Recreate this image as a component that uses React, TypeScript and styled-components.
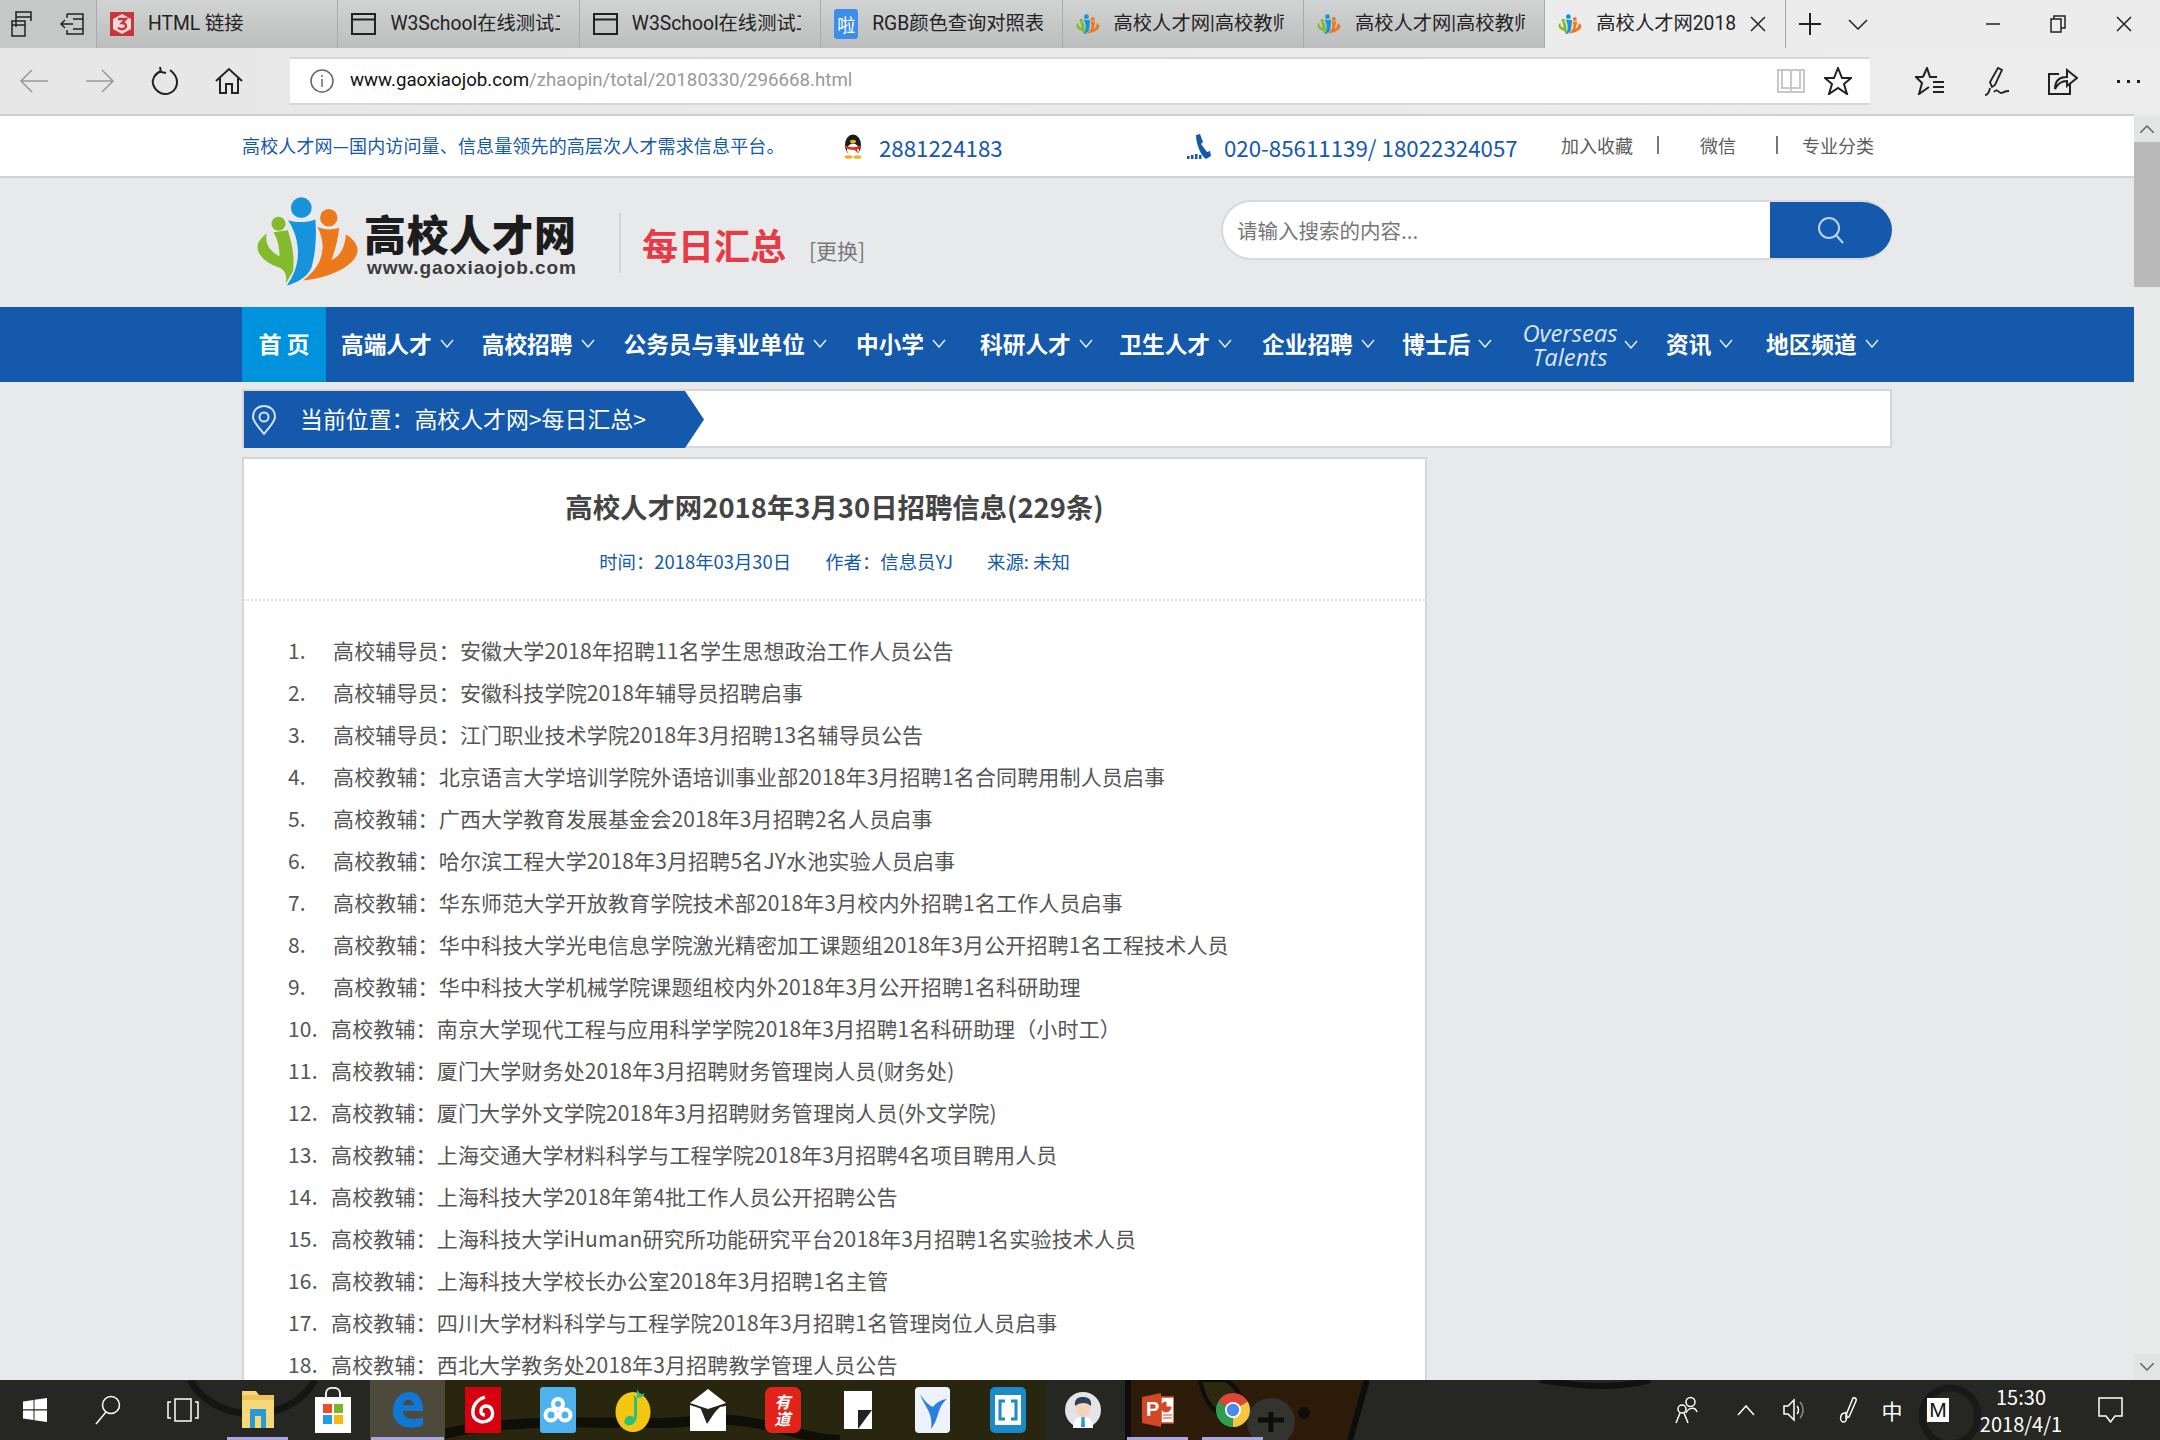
import React from "react";
import styled, { createGlobalStyle } from "styled-components";

const BLUE = "#1459ab";
const CJK = `"Noto Sans CJK SC", "Noto Sans", sans-serif`;

const GlobalStyle = createGlobalStyle`
    html, body {
        margin: 0;
        padding: 0;
        background: #e8e9eb;
    }
    * {
        box-sizing: border-box;
    }
`;

const tabs = [
    { title: "HTML 链接", icon: "w3" },
    { title: "W3School在线测试工具", icon: "page" },
    { title: "W3School在线测试工具", icon: "page" },
    { title: "RGB颜色查询对照表", icon: "rgb" },
    { title: "高校人才网|高校教师招聘", icon: "logo" },
    { title: "高校人才网|高校教师招聘", icon: "logo" },
    { title: "高校人才网2018年3月30日招聘信息", icon: "logo", active: true },
];

const navItems = [
    { name: "高端人才", space: 28 },
    { name: "高校招聘", space: 29 },
    { name: "公务员与事业单位", space: 29 },
    { name: "中小学", space: 34 },
    { name: "科研人才", space: 26.5 },
    { name: "卫生人才", space: 30 },
    { name: "企业招聘", space: 27.5 },
    { name: "博士后", space: 30 },
];

const notices = [
    "高校辅导员：安徽大学2018年招聘11名学生思想政治工作人员公告",
    "高校辅导员：安徽科技学院2018年辅导员招聘启事",
    "高校辅导员：江门职业技术学院2018年3月招聘13名辅导员公告",
    "高校教辅：北京语言大学培训学院外语培训事业部2018年3月招聘1名合同聘用制人员启事",
    "高校教辅：广西大学教育发展基金会2018年3月招聘2名人员启事",
    "高校教辅：哈尔滨工程大学2018年3月招聘5名JY水池实验人员启事",
    "高校教辅：华东师范大学开放教育学院技术部2018年3月校内外招聘1名工作人员启事",
    "高校教辅：华中科技大学光电信息学院激光精密加工课题组2018年3月公开招聘1名工程技术人员",
    "高校教辅：华中科技大学机械学院课题组校内外2018年3月公开招聘1名科研助理",
    "高校教辅：南京大学现代工程与应用科学学院2018年3月招聘1名科研助理（小时工）",
    "高校教辅：厦门大学财务处2018年3月招聘财务管理岗人员(财务处)",
    "高校教辅：厦门大学外文学院2018年3月招聘财务管理岗人员(外文学院)",
    "高校教辅：上海交通大学材料科学与工程学院2018年3月招聘4名项目聘用人员",
    "高校教辅：上海科技大学2018年第4批工作人员公开招聘公告",
    "高校教辅：上海科技大学iHuman研究所功能研究平台2018年3月招聘1名实验技术人员",
    "高校教辅：上海科技大学校长办公室2018年3月招聘1名主管",
    "高校教辅：四川大学材料科学与工程学院2018年3月招聘1名管理岗位人员启事",
    "高校教辅：西北大学教务处2018年3月招聘教学管理人员公告",
];

const LogoMark = ({ size }: { size: number }) => (
    <svg width={size} height={size * 0.87} viewBox="30 20 310 270">
        <circle cx="165" cy="55" r="31" fill="#1793dc" />
        <circle cx="247" cy="85" r="26" fill="#ec7a1c" />
        <circle cx="97" cy="103" r="21" fill="#82bb2b" />
        <path
            d="M82 128 L125 122 C140 170 145 210 140 245 L118 282 C125 255 115 240 95 232 C60 220 30 195 35 165 C40 150 50 140 62 132 C55 160 70 185 100 200 C100 175 95 150 82 128Z"
            fill="#82bb2b"
        />
        <path
            d="M125 92 C150 100 180 100 207 90 C212 150 205 200 195 235 C180 265 150 280 122 287 C140 260 155 230 155 190 C155 155 145 120 125 92Z"
            fill="#1793dc"
        />
        <path
            d="M213 112 C235 122 255 122 278 115 C275 150 265 185 255 210 C275 205 295 180 298 135 C325 150 340 175 330 195 C315 235 240 265 170 272 C200 250 225 220 228 180 C230 160 225 135 213 112Z"
            fill="#ec7a1c"
        />
    </svg>
);

const Line = ({ w, h, color = "#222", sw = 1.5, children }: { w: number; h: number; color?: string; sw?: number; children: React.ReactNode }) => (
    <svg width={w} height={h} viewBox={`0 0 ${w} ${h}`} fill="none" stroke={color} strokeWidth={sw}>
        {children}
    </svg>
);

const TabIcon = ({ kind }: { kind: string }) => {
    if (kind === "w3")
        return (
            <svg width="24" height="24" viewBox="0 0 24 24">
                <rect width="24" height="24" fill="#c8353a" />
                <path d="M12 2 L21 7 V17 L12 22 L3 17 V7Z" fill="#f3d8d8" />
                <path d="M8 7 H16 L12 11 C16 11 17 14 15 16 C13 18 10 17 8 16" fill="none" stroke="#c8353a" strokeWidth="2.4" />
            </svg>
        );
    if (kind === "page")
        return (
            <Line w={25} h={24} sw={2}>
                <rect x="1" y="2" width="23" height="20" />
                <path d="M1 7.5 H24" />
            </Line>
        );
    if (kind === "rgb") return <RgbBadge>啦</RgbBadge>;
    return <LogoMark size={24} />;
};

const Chevron = () => (
    <Line w={14} h={9} color="#e6eef8">
        <path d="M1 1 L7 8 L13 1" />
    </Line>
);

const App = () => (
    <Screen>
        <GlobalStyle />
        <TabStrip>
            <StripButtons>
                <Line w={24} h={26}>
                    <path d="M5 1 H20 V6 H5Z M5 6 V16 M20 6 V10 M1 10 H14 V25 H1Z M1 14 H14" />
                </Line>
                <Line w={24} h={22}>
                    <path d="M7 1 H23 V21 H7 V17 M7 1 V5 M13 6 H23 M13 16 H23 M13 11 H1 M5 7 L1 11 L5 15" />
                </Line>
            </StripButtons>
            {tabs.map((tab, i) => (
                <Tab key={i} $active={tab.active}>
                    <TabIcon kind={tab.icon} />
                    <TabTitle>{tab.title}</TabTitle>
                    {tab.active && (
                        <Line w={16} h={16}>
                            <path d="M1 1 L15 15 M15 1 L1 15" />
                        </Line>
                    )}
                </Tab>
            ))}
            <StripAction $width={48}>
                <Line w={22} h={22} sw={2}>
                    <path d="M11 0 V22 M0 11 H22" />
                </Line>
            </StripAction>
            <StripAction $width={48}>
                <Line w={20} h={11}>
                    <path d="M1 1 L10 10 L19 1" />
                </Line>
            </StripAction>
            <WindowButtons>
                <Line w={14} h={2}>
                    <path d="M0 1 H14" />
                </Line>
                <Line w={16} h={18}>
                    <path d="M4 4 V1 H15 V13 H11 M1 4 H11 V17 H1Z" />
                </Line>
                <Line w={16} h={16}>
                    <path d="M1 1 L15 15 M15 1 L1 15" />
                </Line>
            </WindowButtons>
        </TabStrip>

        <AddressRow>
            <NavButtons>
                <Line w={30} h={26} color="#9a9a9a" sw={1.6}>
                    <path d="M29 13 H2 M13 2 L2 13 L13 24" />
                </Line>
                <Line w={30} h={26} color="#9a9a9a" sw={1.6}>
                    <path d="M1 13 H28 M17 2 L28 13 L17 24" />
                </Line>
                <Line w={28} h={30} sw={2}>
                    <path d="M10 5 C3 8 1 14 2 18 C4 25 10 28 14 28 C21 28 26 23 26 16 C26 11 23 7 19 4 M9 1 L10 6 L15 7" />
                </Line>
                <Line w={28} h={28} sw={2}>
                    <path d="M1 14 L14 2 L27 14 M5 11 V26 H11 V17 H17 V26 H23 V11" />
                </Line>
            </NavButtons>
            <AddressField>
                <Line w={24} h={24} color="#666">
                    <circle cx="12" cy="12" r="11" />
                    <path d="M12 10 V18 M12 6 V8" />
                </Line>
                <Url>
                    www.gaoxiaojob.com<UrlPath>/zhaopin/total/20180330/296668.html</UrlPath>
                </Url>
                <Line w={28} h={26} color="#c8c8c8" sw={2}>
                    <path d="M1 2 H13 L14 4 L15 2 H27 V24 H1Z M14 4 V24 M5 2 V20 H23 V2" />
                </Line>
                <FieldStar>
                    <Line w={28} h={28} sw={2}>
                        <path d="M14 1 L18 11 L27 11 L20 17 L23 27 L14 21 L5 27 L8 17 L1 11 L10 11Z" />
                    </Line>
                </FieldStar>
            </AddressField>
            <ToolButtons>
                <Line w={30} h={28} sw={2}>
                    <path d="M8 10 L12 1 L15 10 H22 M8 10 H1 L7 16 L4 27 L14 20 M18 15 H29 M18 20 H29 M18 25 H29" />
                </Line>
                <Line w={26} h={30} sw={1.8}>
                    <path d="M8 21 L6 16 L14 2 L18 4 L11 19Z M6 22 C5 27 3 29 1 29 M10 26 C13 22 15 27 17 27 C19 27 20 25 25 25" />
                </Line>
                <Line w={30} h={28} sw={2}>
                    <path d="M22 16 V27 H1 V7 H11 M7 22 C7 13 12 10 19 10 V3 L29 11 L19 19 V14 C14 14 10 16 7 22Z" />
                </Line>
                <Dots>
                    <i />
                    <i />
                    <i />
                </Dots>
            </ToolButtons>
        </AddressRow>

        <PageView>
            <Content>
                <TopBar>
                    <TopInner>
                        <Slogan>高校人才网—国内访问量、信息量领先的高层次人才需求信息平台。</Slogan>
                        <ContactQQ>
                            <svg width="24" height="25" viewBox="0 0 24 25">
                                <ellipse cx="12" cy="11" rx="8" ry="10.5" fill="#1b1b1b" />
                                <ellipse cx="12" cy="16" rx="6" ry="6.5" fill="#fff" />
                                <ellipse cx="12" cy="7.5" rx="3" ry="1.8" fill="#f2b01e" />
                                <path d="M4 11 C9 14 15 14 20 11 L20 14 C18 15 17 15 16 15.5 L17 19 L13.5 16 C10 16 7 15 4 14Z" fill="#e12d1f" />
                                <ellipse cx="7.5" cy="23" rx="4" ry="1.8" fill="#f2b01e" />
                                <ellipse cx="16.5" cy="23" rx="4" ry="1.8" fill="#f2b01e" />
                            </svg>
                            <ContactNumber>2881224183</ContactNumber>
                        </ContactQQ>
                        <ContactPhone>
                            <svg width="24" height="25" viewBox="0 0 24 25" fill={BLUE}>
                                <path d="M9 1 L13 0 L16 8 L14 10 L20 18 L23 17 L24 22 L19 25 C14 22 9 10 9 1Z" />
                                <rect x="0" y="22" width="2.5" height="3" />
                                <rect x="4" y="21" width="2.5" height="4" />
                                <rect x="8" y="20" width="2.5" height="5" />
                                <rect x="12" y="21" width="2.5" height="4" />
                            </svg>
                            <ContactNumber>020-85611139/ 18022324057</ContactNumber>
                        </ContactPhone>
                        <TopLinks>
                            <TopLink>加入收藏</TopLink>
                            <LinkRule $left={24} $right={41} />
                            <TopLink>微信</TopLink>
                            <LinkRule $left={40} $right={24} />
                            <TopLink>专业分类</TopLink>
                        </TopLinks>
                    </TopInner>
                </TopBar>

                <Header>
                    <LogoBlock>
                        <LogoMark size={104} />
                        <LogoWords>
                            <LogoName>高校人才网</LogoName>
                            <LogoUrl>www.gaoxiaojob.com</LogoUrl>
                        </LogoWords>
                    </LogoBlock>
                    <SectionName>每日汇总</SectionName>
                    <SwapLink>[更换]</SwapLink>
                    <SearchBox>
                        <SearchInput>请输入搜索的内容...</SearchInput>
                        <SearchButton>
                            <Line w={28} h={28} color="#b9d3ee" sw={2}>
                                <circle cx="12" cy="12" r="10" />
                                <path d="M19 19 L26 27" />
                            </Line>
                        </SearchButton>
                    </SearchBox>
                </Header>

                <NavBar>
                    <NavInner>
                        <HomeItem>首 页</HomeItem>
                        {navItems.map((item) => (
                            <NavItem key={item.name} $space={item.space}>
                                {item.name}
                                <Chevron />
                            </NavItem>
                        ))}
                        <OverseasItem $space={28.5}>
                            <OverseasText>
                                Overseas
                                <br />
                                Talents
                            </OverseasText>
                            <Chevron />
                        </OverseasItem>
                        <NavItem $space={32.5}>
                            资讯
                            <Chevron />
                        </NavItem>
                        <NavItem $space={0}>
                            地区频道
                            <Chevron />
                        </NavItem>
                    </NavInner>
                </NavBar>

                <Breadcrumb>
                    <CrumbTab>
                        <Line w={26} h={30} color="#d5e2f2" sw={2}>
                            <path d="M13 29 C8 22 2 17 2 12 C2 5 7 1 13 1 C19 1 24 5 24 12 C24 17 18 22 13 29Z" />
                            <circle cx="13" cy="12" r="4.5" />
                        </Line>
                        <CrumbText>当前位置：高校人才网&gt;每日汇总&gt;</CrumbText>
                    </CrumbTab>
                </Breadcrumb>

                <Article>
                    <ArticleHead>
                        <ArticleTitle>高校人才网2018年3月30日招聘信息(229条)</ArticleTitle>
                        <ArticleMeta>
                            <span>时间：2018年03月30日</span>
                            <span>作者：信息员YJ</span>
                            <span>来源: 未知</span>
                        </ArticleMeta>
                    </ArticleHead>
                    <NoticeList>
                        {notices.map((text, i) => (
                            <NoticeRow key={i}>
                                <NoticeIndex $wide={i >= 9}>{i + 1}.</NoticeIndex>
                                {text}
                            </NoticeRow>
                        ))}
                    </NoticeList>
                </Article>
            </Content>
            <ScrollBar>
                <ScrollArrow>
                    <Line w={14} h={8} color="#666">
                        <path d="M0 8 L7 1 L14 8" />
                    </Line>
                </ScrollArrow>
                <ScrollThumb />
                <ScrollTrack />
                <ScrollArrow>
                    <Line w={14} h={8} color="#666">
                        <path d="M0 0 L7 7 L14 0" />
                    </Line>
                </ScrollArrow>
            </ScrollBar>
        </PageView>

        <Taskbar>
            <Wallpaper viewBox="0 0 2160 60" preserveAspectRatio="none">
                <path d="M445 0 H1045 V60 H445Z" fill="#29260f" />
                <path d="M1128 0 H1366 L1352 60 H1128Z" fill="#2c1b08" />
                <path d="M1128 0 V60 M1367 0 L1350 60" stroke="#0d0d0b" strokeWidth="6" fill="none" />
                <path d="M1200 0 C1205 25 1215 35 1238 40 C1250 30 1240 8 1225 0Z" fill="#2c2a0e" stroke="#0d0d0b" strokeWidth="4" />
                <circle cx="1271" cy="42" r="24" fill="#33332f" />
                <path d="M1258 40 H1284 M1271 32 V52" stroke="#0d0d0b" strokeWidth="5" />
                <circle cx="1304" cy="33" r="6" fill="#0d0d0b" />
                <path d="M190 0 C215 45 290 45 315 0" stroke="#151513" strokeWidth="7" fill="none" />
                <path d="M420 60 C520 30 640 50 700 40 C760 35 800 60 840 60" stroke="#0f0f08" strokeWidth="10" fill="none" />
                <path d="M1540 0 C1590 8 1620 8 1650 0" stroke="#111" strokeWidth="6" fill="none" />
                <circle cx="1950" cy="36" r="28" stroke="#191917" strokeWidth="7" fill="none" />
            </Wallpaper>
            <StartCell>
                <svg width="24" height="24" viewBox="0 0 24 24" fill="#fff">
                    <path d="M0 3.4 L10.5 2 V11.3 H0Z M11.5 1.8 L24 0 V11.3 H11.5Z M0 12.5 H10.5 V22 L0 20.6Z M11.5 12.5 H24 V24 L11.5 22.2Z" />
                </svg>
            </StartCell>
            <AppCell>
                <Line w={26} h={30} color="#fff">
                    <circle cx="16" cy="10" r="8.5" />
                    <path d="M11 17 L1 29" />
                </Line>
            </AppCell>
            <AppCell>
                <Line w={32} h={24} color="#fff">
                    <rect x="8" y="1" width="16" height="22" />
                    <path d="M4 4 H1 V20 H4 M28 4 H31 V20 H28" />
                </Line>
            </AppCell>
            <AppCell $running>
                <svg width="32" height="40" viewBox="0 0 32 40">
                    <path d="M0 1 H14 L17 5 H32 V38 H0Z" fill="#f6d77a" />
                    <path d="M0 5 H32 V10 H0Z" fill="#f0c253" />
                    <path d="M8 38 V19 H24 V38 H19 V26 H13 V38Z" fill="#2a9ad6" />
                </svg>
            </AppCell>
            <AppCell>
                <svg width="36" height="46" viewBox="0 0 36 46">
                    <path d="M11 12 V6 C11 -1 25 -1 25 6 V12" fill="none" stroke="#eee" strokeWidth="2" />
                    <rect y="10" width="36" height="36" fill="#fff" />
                    <rect x="8" y="17" width="9" height="9" fill="#e8512c" />
                    <rect x="19" y="17" width="9" height="9" fill="#7db32a" />
                    <rect x="8" y="28" width="9" height="9" fill="#1ba1e2" />
                    <rect x="19" y="28" width="9" height="9" fill="#f5b916" />
                </svg>
            </AppCell>
            <AppCell $running $active>
                <svg width="30" height="36" viewBox="0 0 30 36">
                    <path d="M0 20 C0 6 8 0 17 0 C25 0 30 7 30 19 H10 C10 26 20 30 30 25 V33 C18 39 0 35 0 20Z M10 13 H21 C20 6 11 6 10 13Z" fill="#0f78d4" fillRule="evenodd" />
                </svg>
            </AppCell>
            <AppCell>
                <SquareApp $bg="#d7000f" $w={36} $h={46}>
                    <Line w={26} h={30} color="#fff" sw={3.4}>
                        <path d="M15 2 C6 5 2 12 3 19 C4 26 13 29 19 25 C25 21 23 11 16 11 C10 11 9 20 15 20" />
                    </Line>
                </SquareApp>
            </AppCell>
            <AppCell>
                <SquareApp $bg="#4db2ee" $w={36} $h={46} $radius={3}>
                    <Line w={30} h={26} color="#fff" sw={4}>
                        <circle cx="15" cy="7" r="5" />
                        <circle cx="8" cy="18" r="5.5" />
                        <circle cx="22" cy="18" r="5.5" />
                    </Line>
                </SquareApp>
            </AppCell>
            <AppCell>
                <svg width="36" height="46" viewBox="0 0 36 46">
                    <ellipse cx="18" cy="25" rx="17.5" ry="20" fill="#f2c612" />
                    <path d="M22 2 L22 28 C22 42 6 40 10 32 C13 27 18 29 19 31 L19 8 C22 12 27 12 30 6 C27 8 24 7 22 2Z" fill="#2dbf7a" />
                </svg>
            </AppCell>
            <AppCell>
                <svg width="36" height="42" viewBox="0 0 36 42" fill="#fff">
                    <path d="M18 0 L36 14 L18 20 L0 14Z" />
                    <path d="M0 16 L24 24 L30 18 L36 17 V42 H0Z" />
                    <path d="M10 18 L25 23 L17 35Z" fill="#222" />
                </svg>
            </AppCell>
            <AppCell>
                <SquareApp $bg="#e3231a" $w={36} $h={46} $radius={7}>
                    <YoudaoText>有道</YoudaoText>
                </SquareApp>
            </AppCell>
            <AppCell>
                <svg width="28" height="38" viewBox="0 0 28 38">
                    <rect width="28" height="38" fill="#fff" />
                    <path d="M14 38 L28 19 H14Z" fill="#222" />
                    <path d="M18 38 L28 25 V38Z" fill="#fff" />
                </svg>
            </AppCell>
            <AppCell>
                <SquareApp $bg="#eef3fb" $w={35} $h={46} $radius={4}>
                    <svg width="30" height="40" viewBox="0 0 30 40" fill="#2a7fe0">
                        <path d="M2 4 C6 10 10 15 15 17 C18 13 22 10 29 9 C24 13 22 18 20 24 C18 31 16 35 13 39 C14 32 13 27 11 22 C8 16 4 10 2 4Z" />
                    </svg>
                </SquareApp>
            </AppCell>
            <AppCell>
                <SquareApp $bg="#1a8ac8" $w={36} $h={46} $radius={5}>
                    <BracketBox>
                        <Line w={24} h={26} color="#1a8ac8" sw={3}>
                            <path d="M9 4 H4 V22 H9 M15 4 H20 V22 H15" />
                        </Line>
                    </BracketBox>
                </SquareApp>
            </AppCell>
            <AppCell>
                <svg width="36" height="36" viewBox="0 0 36 36">
                    <circle cx="18" cy="18" r="18" fill="#e2e4e6" />
                    <path d="M8 36 C8 28 12 25 18 25 C24 25 28 28 28 36Z" fill="#fff" />
                    <ellipse cx="18" cy="16" rx="7" ry="9" fill="#f6d3b8" />
                    <path d="M10 14 C9 6 14 5 18 5 C23 5 27 7 26 14 C22 10 15 10 10 14Z" fill="#2e3f5e" />
                    <path d="M16.5 25 H19.5 L20 35 H16Z" fill="#2a9ad6" />
                </svg>
            </AppCell>
            <AppCell $running>
                <svg width="32" height="34" viewBox="0 0 32 34">
                    <path d="M0 4 L19 0 V34 L0 30Z" fill="#d24726" />
                    <rect x="19" y="4" width="13" height="26" fill="#fff" stroke="#d24726" strokeWidth="1.5" />
                    <path d="M24 9 A5 5 0 1 0 29 14 H24Z M21 22 H30 M21 25 H30" fill="#d24726" stroke="#d24726" />
                    <PptLetter x="4" y="23">P</PptLetter>
                </svg>
            </AppCell>
            <AppCell $running>
                <svg width="34" height="34" viewBox="0 0 34 34">
                    <path d="M17 17 L2.3 8.5 A17 17 0 0 1 31.7 8.5Z" fill="#e0453a" />
                    <path d="M17 17 L31.7 8.5 A17 17 0 0 1 17 34Z" fill="#f5c63f" />
                    <path d="M17 17 L17 34 A17 17 0 0 1 2.3 8.5Z" fill="#2f9e52" />
                    <circle cx="17" cy="17" r="8" fill="#fff" />
                    <circle cx="17" cy="17" r="6.2" fill="#4a89f0" />
                </svg>
            </AppCell>
            <Tray>
                <TrayCell>
                    <Line w={23} h={28} color="#fff">
                        <circle cx="15.5" cy="6" r="4.5" />
                        <circle cx="7" cy="13" r="4" />
                        <path d="M11 17 C13 12 20 10 22 16 M1 27 L5 17 M13 27 L9 17" />
                    </Line>
                </TrayCell>
                <TrayCell>
                    <Line w={18} h={11} color="#fff">
                        <path d="M1 10 L9 1 L17 10" />
                    </Line>
                </TrayCell>
                <TrayCell>
                    <Line w={22} h={26} color="#fff">
                        <path d="M1 9 H5 L11 3 V23 L5 17 H1Z" />
                        <path d="M14 9 C16 11 16 15 14 17" />
                        <path d="M17 5 C21 9 21 17 17 21" stroke="#888" />
                    </Line>
                </TrayCell>
                <TrayCell>
                    <Line w={20} h={28} color="#fff">
                        <path d="M8 19 L15 2 C17 1 19 3 18 5 L11 21 L8 22Z M8 17 C2 16 1 25 5 26 C9 27 10 19 7 16" />
                    </Line>
                </TrayCell>
                <TrayCell>
                    <ImeGlyph>中</ImeGlyph>
                </TrayCell>
                <TrayCell>
                    <ImeBox>M</ImeBox>
                </TrayCell>
                <Clock>
                    <span>15:30</span>
                    <span>2018/4/1</span>
                </Clock>
                <TrayCell>
                    <Line w={25} h={26} color="#fff">
                        <path d="M1 1 H24 V19 H17 L12.5 25 L8 19 H1Z" />
                    </Line>
                </TrayCell>
            </Tray>
        </Taskbar>
    </Screen>
);

export default App;

const Screen = styled.div`
    width: 2160px;
    height: 1440px;
    display: flex;
    flex-direction: column;
    overflow: hidden;
    font-family: ${CJK};
`;

const TabStrip = styled.div`
    height: 48px;
    flex: none;
    display: flex;
    background: linear-gradient(90deg, #c6c7c7 0%, #cfd0d0 60%, #ececec 84%, #ececec 100%);
`;

const StripButtons = styled.div`
    width: 96px;
    flex: none;
    display: flex;
    align-items: center;
    gap: 25px;
    padding-left: 11px;
`;

const Tab = styled.div<{ $active?: boolean }>`
    width: 241.4px;
    flex: none;
    display: flex;
    align-items: center;
    gap: 14px;
    padding: 0 19px 0 13px;
    border-left: 1px solid #a9aaaa;
    background: ${(p) => (p.$active ? "#ececec" : "linear-gradient(180deg, #d2d3d3 0%, #bcbdbd 100%)")};
    ${(p) => p.$active && "border-right: 1px solid #a9aaaa;"}
`;

const TabTitle = styled.div`
    flex: 1;
    min-width: 0;
    overflow: hidden;
    white-space: nowrap;
    font-family: "Roboto", ${CJK};
    font-size: 19.3px;
    line-height: 48px;
    color: #222;
`;

const RgbBadge = styled.div`
    width: 24px;
    height: 30px;
    flex: none;
    border-radius: 3px;
    background: #3d8ee8;
    color: #fff;
    font-size: 18px;
    line-height: 30px;
    text-align: center;
`;

const StripAction = styled.div<{ $width: number }>`
    width: ${(p) => p.$width}px;
    flex: none;
    display: flex;
    align-items: center;
    justify-content: center;
`;

const WindowButtons = styled.div`
    flex: 1;
    display: flex;
    align-items: center;
    justify-content: space-between;
    padding: 0 28px 0 104px;
`;

const AddressRow = styled.div`
    height: 66px;
    flex: none;
    display: flex;
    align-items: center;
    background: linear-gradient(90deg, #e7e7e7 0%, #ededed 100%);
`;

const NavButtons = styled.div`
    width: 290px;
    flex: none;
    display: flex;
    align-items: center;
    gap: 36px;
    padding-left: 19px;
`;

const AddressField = styled.div`
    width: 1580px;
    height: 48px;
    flex: none;
    display: flex;
    align-items: center;
    padding: 0 18px 0 20px;
    background: #fff;
    border-top: 2px solid #d8d8d8;
    border-bottom: 2px solid #d8d8d8;
`;

const Url = styled.div`
    flex: 1;
    margin: -3px 0 0 16px;
    font-family: "Roboto", sans-serif;
    font-size: 18.7px;
    color: #111;
`;

const UrlPath = styled.span`
    color: #999;
`;

const FieldStar = styled.div`
    margin-left: 19px;
    display: flex;
`;

const ToolButtons = styled.div`
    flex: 1;
    display: flex;
    align-items: center;
    justify-content: space-between;
    padding: 0 20px 0 45px;
`;

const Dots = styled.div`
    display: flex;
    gap: 7px;
    i {
        width: 3px;
        height: 3px;
        background: #222;
    }
`;

const PageView = styled.div`
    flex: 1;
    min-height: 0;
    display: flex;
`;

const Content = styled.div`
    flex: 1;
    min-width: 0;
    overflow: hidden;
    background: #e8e9eb;
`;

const TopBar = styled.div`
    height: 64px;
    background: #fff;
    border-top: 2px solid #cfcfcf;
    border-bottom: 2px solid #d2d2d2;
`;

const TopInner = styled.div`
    width: 1650px;
    height: 100%;
    margin: 0 auto;
    display: flex;
    align-items: center;
`;

const Slogan = styled.div`
    width: 599px;
    margin-top: -2px;
    flex: none;
    font-size: 18px;
    letter-spacing: 0.15px;
    color: ${BLUE};
`;

const ContactQQ = styled.div`
    width: 346px;
    flex: none;
    display: flex;
    align-items: center;
    gap: 14px;
`;

const ContactPhone = styled.div`
    width: 374px;
    flex: none;
    display: flex;
    align-items: center;
    gap: 13px;
`;

const ContactNumber = styled.div`
    margin-top: 1px;
    font-size: 22.3px;
    color: ${BLUE};
    white-space: nowrap;
`;

const TopLinks = styled.div`
    flex: none;
    display: flex;
    align-items: center;
`;

const TopLink = styled.div`
    font-size: 18px;
    color: #5c5c5c;
    margin-top: -2px;
`;

const LinkRule = styled.div<{ $left: number; $right: number }>`
    width: 2px;
    height: 18px;
    margin: -2px ${(p) => p.$right}px 0 ${(p) => p.$left}px;
    background: #77777a;
`;

const Header = styled.div`
    width: 1650px;
    height: 129px;
    margin: 0 auto;
    display: flex;
    align-items: center;
    padding-left: 14px;
`;

const LogoBlock = styled.div`
    width: 365px;
    height: 60px;
    flex: none;
    display: flex;
    align-items: center;
    border-right: 2px solid #d3d4d6;
    svg {
        flex: none;
        margin-top: -3px;
    }
`;

const LogoWords = styled.div`
    display: flex;
    flex-direction: column;
    margin: 2px 0 0 4px;
`;

const LogoName = styled.div`
    font-size: 42px;
    font-weight: 900;
    line-height: 46px;
    letter-spacing: 0.5px;
    color: #1d1d1d;
    white-space: nowrap;
`;

const LogoUrl = styled.div`
    margin: 2px 0 0 3px;
    font-family: "Liberation Sans", sans-serif;
    font-size: 19px;
    font-weight: 700;
    line-height: 20px;
    letter-spacing: 0.9px;
    color: #3c3c3c;
    white-space: nowrap;
`;

const SectionName = styled.div`
    margin: 2px 0 0 21px;
    font-size: 36px;
    font-weight: 700;
    color: #e63a46;
`;

const SwapLink = styled.div`
    margin: 15px 0 0 23px;
    font-size: 21px;
    color: #777;
`;

const SearchBox = styled.div`
    margin: 22px 0 0 auto;
    width: 671px;
    height: 60px;
    align-self: flex-start;
    display: flex;
    border-radius: 30px;
    overflow: hidden;
    background: #fff;
    border: 2px solid #d9d9d9;
    border-right: 0;
`;

const SearchInput = styled.div`
    flex: 1;
    padding-left: 14px;
    font-size: 20.5px;
    line-height: 56px;
    color: #777;
`;

const SearchButton = styled.div`
    width: 122px;
    margin: -2px 0;
    display: flex;
    align-items: center;
    justify-content: center;
    background: ${BLUE};
`;

const NavBar = styled.div`
    height: 75px;
    background: ${BLUE};
`;

const NavInner = styled.div`
    width: 1650px;
    height: 100%;
    margin: 0 auto;
    display: flex;
`;

const HomeItem = styled.div`
    width: 84px;
    flex: none;
    margin-right: 15px;
    background: #0093dd;
    color: #fff;
    font-size: 23px;
    font-weight: 700;
    line-height: 73px;
    text-align: center;
`;

const NavItem = styled.div<{ $space: number }>`
    flex: none;
    display: flex;
    align-items: center;
    gap: 8px;
    margin-right: ${(p) => p.$space}px;
    padding-bottom: 2px;
    color: #fff;
    font-size: 22.7px;
    font-weight: 700;
    white-space: nowrap;
`;

const OverseasItem = styled(NavItem)`
    font-weight: 400;
    gap: 6px;
    padding-bottom: 0;
`;

const OverseasText = styled.div`
    font-family: "Open Sans", sans-serif;
    font-style: italic;
    font-size: 23.8px;
    line-height: 24px;
    text-align: center;
    color: #dbe5f2;
`;

const Breadcrumb = styled.div`
    width: 1650px;
    height: 59px;
    margin: 7px auto 0;
    display: flex;
    background: #fff;
    border: 2px solid #d5d6d8;
`;

const CrumbTab = styled.div`
    width: 460px;
    margin-bottom: -2px;
    display: flex;
    align-items: center;
    gap: 23px;
    padding-left: 7px;
    background: ${BLUE};
    clip-path: polygon(0 0, 441px 0, 460px 50%, 441px 100%, 0 100%);
`;

const CrumbText = styled.div`
    margin-top: -4px;
    font-size: 22.9px;
    color: #fff;
    white-space: nowrap;
`;

const Article = styled.div`
    width: 1185px;
    margin: 9px 0 0 calc((100% - 1650px) / 2);
    padding-bottom: 60px;
    background: #fff;
    border: 2px solid #d5d6d8;
`;

const ArticleHead = styled.div`
    padding-top: 27px;
    border-bottom: 2px dotted #e2e2e2;
    text-align: center;
`;

const ArticleTitle = styled.div`
    font-size: 27.4px;
    font-weight: 700;
    line-height: 40px;
    color: #444;
`;

const ArticleMeta = styled.div`
    margin-top: 23px;
    padding-bottom: 26px;
    display: flex;
    justify-content: center;
    gap: 34px;
    font-size: 18.4px;
    line-height: 24px;
    color: ${BLUE};
`;

const NoticeList = styled.div`
    margin-top: 28px;
    padding-left: 44px;
`;

const NoticeRow = styled.div`
    display: flex;
    font-size: 21px;
    line-height: 42px;
    letter-spacing: 0.15px;
    color: #555;
    white-space: nowrap;
`;

const NoticeIndex = styled.div<{ $wide: boolean }>`
    width: ${(p) => (p.$wide ? 43 : 45)}px;
    flex: none;
`;

const ScrollBar = styled.div`
    width: 26px;
    flex: none;
    display: flex;
    flex-direction: column;
    background: #e8e9e9;
    padding-top: 2px;
`;

const ScrollArrow = styled.div`
    height: 26px;
    flex: none;
    display: flex;
    align-items: center;
    justify-content: center;
    background: #e3e4e4;
`;

const ScrollThumb = styled.div`
    height: 145px;
    flex: none;
    background: #b9b9b9;
`;

const ScrollTrack = styled.div`
    flex: 1;
`;

const Taskbar = styled.div`
    position: relative;
    height: 60px;
    flex: none;
    display: flex;
    background: #262622;
`;

const Wallpaper = styled.svg`
    position: absolute;
    inset: 0;
    width: 100%;
    height: 100%;
`;

const StartCell = styled.div`
    position: relative;
    width: 70px;
    flex: none;
    display: flex;
    align-items: center;
    justify-content: center;
`;

const AppCell = styled.div<{ $running?: boolean; $active?: boolean }>`
    position: relative;
    width: 75px;
    flex: none;
    display: flex;
    align-items: center;
    justify-content: center;
    background: ${(p) => (p.$active ? "#4d4a3c" : "transparent")};
    ${(p) =>
        p.$running &&
        `
        &::after {
            content: "";
            position: absolute;
            left: ${p.$active ? 1 : 7}px;
            right: ${p.$active ? 1 : 7}px;
            bottom: 0;
            height: 3px;
            background: #aaa5e0;
        }
    `}
`;

const SquareApp = styled.div<{ $bg: string; $w: number; $h: number; $radius?: number }>`
    width: ${(p) => p.$w}px;
    height: ${(p) => p.$h}px;
    display: flex;
    align-items: center;
    justify-content: center;
    background: ${(p) => p.$bg};
    border-radius: ${(p) => p.$radius ?? 0}px;
`;

const YoudaoText = styled.div`
    width: 20px;
    font-size: 16px;
    font-weight: 700;
    font-style: italic;
    line-height: 17px;
    color: #fff;
    text-align: center;
`;

const BracketBox = styled.div`
    width: 26px;
    height: 30px;
    display: flex;
    align-items: center;
    justify-content: center;
    background: #fff;
`;

const PptLetter = styled.text`
    font-family: "Liberation Sans", sans-serif;
    font-size: 20px;
    font-weight: 700;
    fill: #fff;
`;

const Tray = styled.div`
    position: absolute;
    top: 0;
    bottom: 0;
    left: 1656px;
    right: 6px;
    display: grid;
    grid-template-columns: 60px 60px 36px 72px 16px 76px 90px 88px;
    align-items: center;
    justify-items: center;
`;

const TrayCell = styled.div`
    display: flex;
    align-items: center;
    justify-content: center;
`;

const ImeGlyph = styled.div`
    font-size: 21px;
    color: #fff;
`;

const ImeBox = styled.div`
    width: 22px;
    height: 24px;
    background: #fff;
    color: #111;
    font-family: "Liberation Sans", sans-serif;
    font-size: 21px;
    line-height: 24px;
    text-align: center;
`;

const Clock = styled.div`
    display: flex;
    flex-direction: column;
    align-items: center;
    gap: 3px;
    color: #fff;
    font-size: 20px;
    line-height: 24px;
`;
